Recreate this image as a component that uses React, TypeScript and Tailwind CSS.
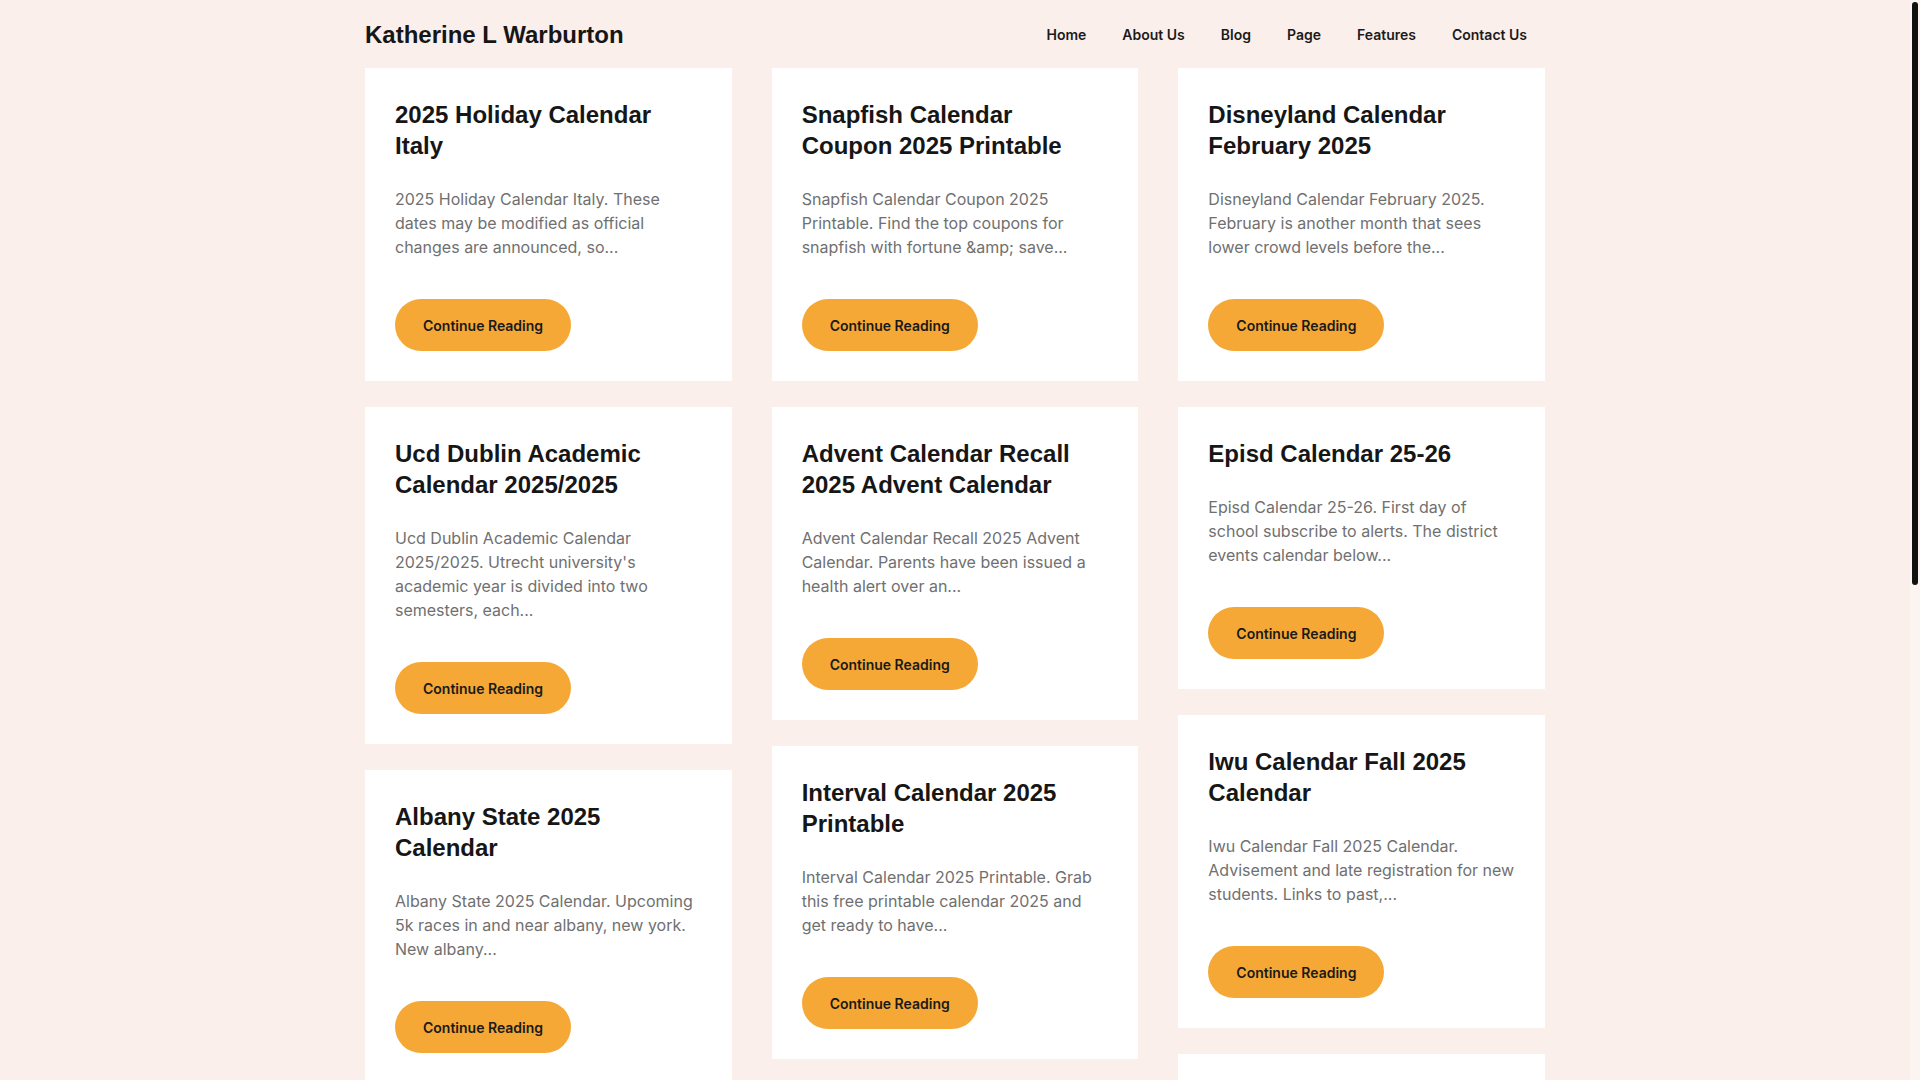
const navLinks = ['Home', 'About Us', 'Blog', 'Page', 'Features', 'Contact Us']

type Post = { title: string; excerpt: string }

const columns: Post[][] = [
    [
        {
            title: '2025 Holiday Calendar Italy',
            excerpt: '2025 Holiday Calendar Italy. These dates may be modified as official changes are announced, so...',
        },
        {
            title: 'Ucd Dublin Academic Calendar 2025/2025',
            excerpt: "Ucd Dublin Academic Calendar 2025/2025. Utrecht university's academic year is divided into two semesters, each...",
        },
        {
            title: 'Albany State 2025 Calendar',
            excerpt: 'Albany State 2025 Calendar. Upcoming 5k races in and near albany, new york. New albany...',
        },
        {
            title: 'Uic Academic Calendar Fall 2025',
            excerpt: 'Uic Academic Calendar Fall 2025. Find important dates for registration, classes and final exams...',
        },
    ],
    [
        {
            title: 'Snapfish Calendar Coupon 2025 Printable',
            excerpt: 'Snapfish Calendar Coupon 2025 Printable. Find the top coupons for snapfish with fortune &amp; save...',
        },
        {
            title: 'Advent Calendar Recall 2025 Advent Calendar',
            excerpt: 'Advent Calendar Recall 2025 Advent Calendar. Parents have been issued a health alert over an...',
        },
        {
            title: 'Interval Calendar 2025 Printable',
            excerpt: 'Interval Calendar 2025 Printable. Grab this free printable calendar 2025 and get ready to have...',
        },
        {
            title: 'Lunar Calendar 2025 Printable',
            excerpt: 'Lunar Calendar 2025 Printable. See every new moon and full moon of the year on one page...',
        },
    ],
    [
        {
            title: 'Disneyland Calendar February 2025',
            excerpt: 'Disneyland Calendar February 2025. February is another month that sees lower crowd levels before the...',
        },
        {
            title: 'Episd Calendar 25-26',
            excerpt: 'Episd Calendar 25-26. First day of school subscribe to alerts. The district events calendar below...',
        },
        {
            title: 'Iwu Calendar Fall 2025 Calendar',
            excerpt: 'Iwu Calendar Fall 2025 Calendar. Advisement and late registration for new students. Links to past,...',
        },
        {
            title: 'Kroger Calendar 2025 Free',
            excerpt: 'Kroger Calendar 2025 Free. Pick up a copy at the store or download the printable version...',
        },
    ],
]

function PostCard({ title, excerpt }: Post) {
    return (
        <article className="bg-white px-[30px] pt-[31px] pb-[30px]">
            <h2 className="text-[24px] leading-[31px] font-bold text-[#161616] mb-[26px]"
                style={{ fontFamily: '"Liberation Sans", Arial, sans-serif' }}>
                {title}
            </h2>
            <p className="text-[16px] leading-[24px] text-[#707070] mb-[40px]">{excerpt}</p>
            <a href="#"
                className="inline-flex items-center h-[52px] px-[28px] rounded-full bg-[#f5a835] text-[14px] font-semibold text-[#1a1a1a]">
                Continue Reading
            </a>
        </article>
    )
}

export default function App() {
    return (
        <div className="min-h-screen bg-[#fbefeb] pr-[10px]"
            style={{ fontFamily: 'Inter, "Noto Sans", sans-serif' }}>
            <div className="w-[1180px] mx-auto">
                {/* Header */}
                <header className="h-[68px] flex items-center justify-between">
                    <a href="#" className="pt-[2px] text-[24px] font-bold text-[#161616]"
                        style={{ fontFamily: '"Liberation Sans", Arial, sans-serif' }}>
                        Katherine L Warburton
                    </a>
                    <nav className="flex items-center">
                        {navLinks.map(label => (
                            <a key={label} href="#" className="px-[18px] text-[14px] font-semibold text-[#1b1b1b]">
                                {label}
                            </a>
                        ))}
                    </nav>
                </header>

                {/* Posts */}
                <main className="grid grid-cols-3 gap-x-10 items-start pb-[140px]">
                    {columns.map((col, i) => (
                        <div key={i} className="flex flex-col gap-[26px]">
                            {col.map(post => <PostCard key={post.title} {...post} />)}
                        </div>
                    ))}
                </main>

                <footer className="py-10 text-center text-[15px] text-[#707070]">
                    © 2025 Katherine L Warburton
                </footer>
            </div>

            {/* Scrollbar */}
            <div className="fixed top-0 right-0 w-[10px] h-screen bg-[#fcf4f1]">
                <div className="mt-[2px] mx-[2px] h-[583px] rounded-full bg-[#111111]" />
            </div>
        </div>
    )
}
